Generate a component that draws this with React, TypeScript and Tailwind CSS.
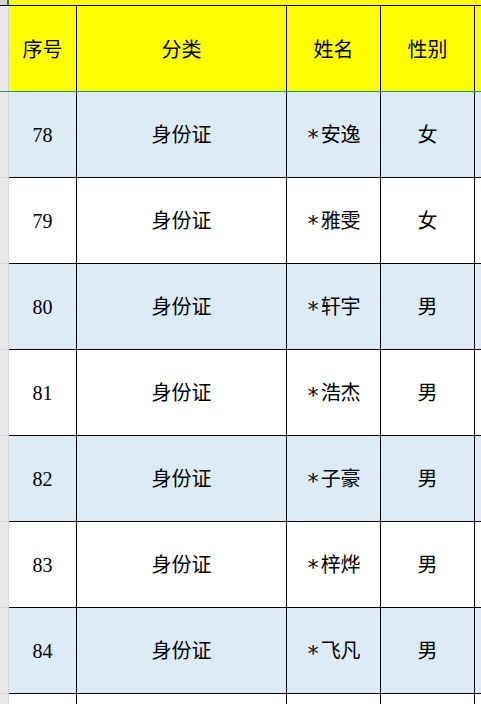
const rows = [
  { no: 78, name: '安逸', sex: '女' },
  { no: 79, name: '雅雯', sex: '女' },
  { no: 80, name: '轩宇', sex: '男' },
  { no: 81, name: '浩杰', sex: '男' },
  { no: 82, name: '子豪', sex: '男' },
  { no: 83, name: '梓烨', sex: '男' },
  { no: 84, name: '飞凡', sex: '男' },
]

const cell = 'flex items-center justify-center border-r border-black shrink-0'

export default function App() {
  return (
    <div
      className="w-[481px] h-[704px] overflow-hidden bg-white text-black text-[20px]"
      style={{ fontFamily: '"Liberation Serif", "Noto Sans CJK SC", serif' }}
    >
      {/* strip above header */}
      <div className="flex h-[5px]">
        <div className="w-[9px] shrink-0 bg-[#d3d3d3] flex justify-end">
          <div className="w-[2px] bg-[#217346]" />
        </div>
        <div className="flex-1 bg-[#ffff00]" />
      </div>

      {/* header */}
      <div
        className="flex h-[87px] border-t border-b border-t-black border-b-[#1fa06a]"
        style={{ fontFamily: '"Noto Sans CJK SC", sans-serif' }}
      >
        <div className="w-[9px] shrink-0 bg-[#e9e9e9] border-r border-[#d2d2d2]" />
        <div className="flex flex-1 bg-[#ffff00]">
          <div className={`${cell} w-[68px]`}>序号</div>
          <div className={`${cell} w-[210px]`}>分类</div>
          <div className={`${cell} w-[94px]`}>姓名</div>
          <div className={`${cell} w-[94px]`}>性别</div>
          <div className="flex-1" />
        </div>
      </div>

      {rows.map((r, i) => (
        <div key={r.no} className="flex h-[86px]">
          <div className="w-[9px] shrink-0 bg-[#e9e9e9] border-r border-b border-[#d6d6d6]" />
          <div className={`flex flex-1 border-b border-black ${i % 2 === 0 ? 'bg-[#ddebf7]' : 'bg-white'}`}>
            <div className={`${cell} w-[68px]`}>{r.no}</div>
            <div className={`${cell} w-[210px]`}>身份证</div>
            <div className={`${cell} w-[94px]`}>
              <span className="translate-y-[3px] mr-[1px] text-[22px]" style={{ fontFamily: '"DejaVu Sans Mono", monospace' }}>*</span>
              {r.name}
            </div>
            <div className={`${cell} w-[94px]`}>{r.sex}</div>
            <div className="flex-1" />
          </div>
        </div>
      ))}

      <div className="flex h-[86px]">
        <div className="w-[9px] shrink-0 bg-[#e9e9e9] border-r border-[#d6d6d6]" />
        <div className="flex flex-1 bg-white">
          <div className={`${cell} w-[68px]`} />
          <div className={`${cell} w-[210px]`} />
          <div className={`${cell} w-[94px]`} />
          <div className={`${cell} w-[94px]`} />
          <div className="flex-1" />
        </div>
      </div>
    </div>
  )
}
